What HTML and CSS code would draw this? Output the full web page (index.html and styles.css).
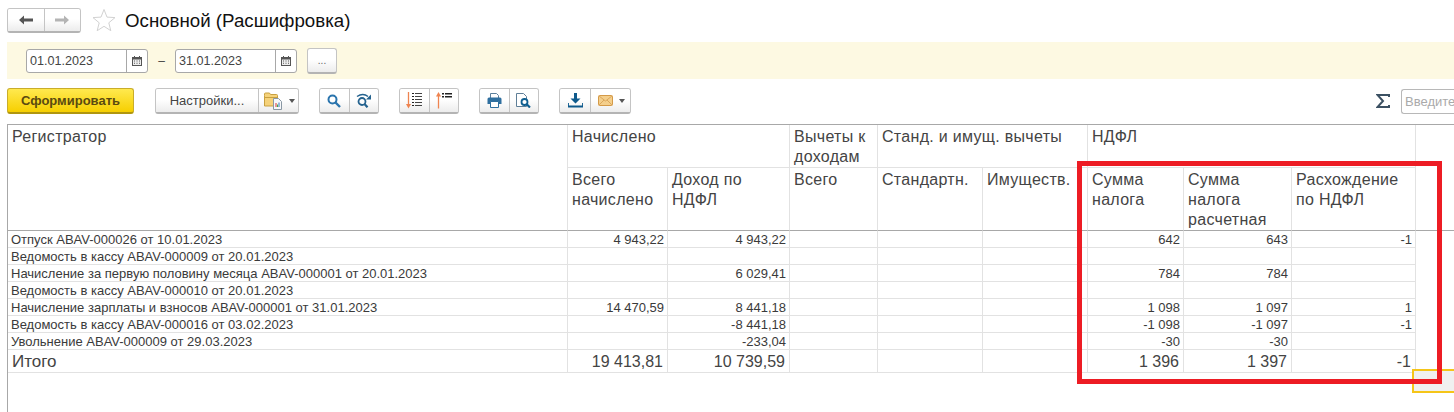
FILE: index.html
```html
<!DOCTYPE html>
<html lang="ru">
<head>
<meta charset="utf-8">
<title>Основной (Расшифровка)</title>
<link rel="stylesheet" href="styles.css">
</head>
<body>
<div class="page">
  <header class="titlebar">
    <div class="btn-group nav">
      <span class="btn seg-nav"><svg width="16" height="12" viewBox="0 0 16 12"><path d="M1 6l5-4.500V4.500h9v3H6v3z" fill="#555"/></svg></span>
      <span class="btn seg-nav"><svg width="16" height="12" viewBox="0 0 16 12"><path d="M15 6l-5-4.500V4.500H1v3h9v3z" fill="#b4b4b4"/></svg></span>
    </div>
    <svg class="star" width="24" height="24" viewBox="0 0 24 24"><path d="M12 1.500l3 7.600 8 .5-6.200 5.200 2 7.900L12 18.300l-6.800 4.400 2-7.900L1 9.600l8-.5z" fill="#fff" stroke="#d2d2d2" stroke-width="1"/></svg>
    <h1 class="title">Основной (Расшифровка)</h1>
  </header>

  <section class="filter">
    <div class="date"><span class="date-val">01.01.2023</span><span class="date-btn"><svg width="10" height="10" viewBox="0 0 10 10"><path d="M0 1h10v9H0zM2 0h1v2H2zM7 0h1v2H7z" fill="#555"/><path d="M1 3.500h8V9H1z" fill="#eee"/><path d="M2 4.500h1v1H2zM4.500 4.500h1v1h-1zM7 4.500h1v1H7zM2 6.800h1v1H2zM4.500 6.800h1v1h-1zM7 6.800h1v1H7z" fill="#555"/></svg></span></div>
    <span class="dash">–</span>
    <div class="date"><span class="date-val">31.01.2023</span><span class="date-btn"><svg width="10" height="10" viewBox="0 0 10 10"><path d="M0 1h10v9H0zM2 0h1v2H2zM7 0h1v2H7z" fill="#555"/><path d="M1 3.500h8V9H1z" fill="#eee"/><path d="M2 4.500h1v1H2zM4.500 4.500h1v1h-1zM7 4.500h1v1H7zM2 6.800h1v1H2zM4.500 6.800h1v1h-1zM7 6.800h1v1H7z" fill="#555"/></svg></span></div>
    <span class="btn more">...</span>
  </section>

  <section class="toolbar">
    <span class="btn primary">Сформировать</span>
    <div class="btn-group g-settings">
      <span class="btn seg-text">Настройки...</span>
      <span class="btn seg-wide">
        <svg width="20" height="18" viewBox="0 0 20 18"><path d="M.5 3.500V2q0-1 1-1h4l1 1.500h6q1 0 1 1V14H.5z" fill="#f5d27a" stroke="#c8a040"/><path d="M.5 5.500h13.500" stroke="#c8a040"/><path d="M9.500 6.500h5l3 3v8h-8z" fill="#f6f8fa" stroke="#8a98a4"/><path d="M11.500 11h1v4h-1z" fill="#d33"/><path d="M13 12.500h1V15h-1z" fill="#4a4"/><path d="M14.500 10.500h1V15h-1z" fill="#37b"/></svg>
        <i class="caret"></i>
      </span>
    </div>
    <div class="btn-group g-icons">
      <span class="btn seg"><svg width="14" height="14" viewBox="0 0 14 14"><circle cx="5.500" cy="5.500" r="4" fill="none" stroke="#2a74ad" stroke-width="2"/><path d="M8.500 8.500l4.500 4.500" stroke="#2a74ad" stroke-width="2.400"/></svg></span>
      <span class="btn seg"><svg width="16" height="15" viewBox="0 0 16 15"><circle cx="6" cy="8.500" r="3.500" fill="none" stroke="#25638f" stroke-width="1.800"/><path d="M8.500 11l3 3.300" stroke="#25638f" stroke-width="2.200"/><path d="M1 3.500Q7-.5 12 3.500" fill="none" stroke="#25638f" stroke-width="1.500"/><path d="M15 1.500v5h-5z" fill="#25638f"/></svg></span>
    </div>
    <div class="btn-group g-icons">
      <span class="btn seg"><svg width="16" height="17" viewBox="0 0 16 17"><path d="M2.500 0v13" stroke="#ef8450" stroke-width="1.300"/><path d="M0 12h5l-2.500 4.500z" fill="#ef8450"/><path d="M6 1h2v1H6zM6 4h2v1H6zM6 7h2v1H6zM6 10h2v1H6zM6 13h2v1H6z" fill="#222"/><path d="M9 1h7v1H9zM9 4h7v1H9zM9 7h7v1H9zM9 10h7v1H9zM9 13h7v1H9z" fill="#444"/></svg></span>
      <span class="btn seg"><svg width="16" height="17" viewBox="0 0 16 17"><path d="M2.500 3v13.500" stroke="#ef8450" stroke-width="1.300"/><path d="M0 4.500h5L2.500 0z" fill="#ef8450"/><path d="M6 1h2v1.500H6zM6 4h2v1.500H6z" fill="#222"/><path d="M9 1h7v1.500H9zM9 4h7v1.500H9z" fill="#222"/></svg></span>
    </div>
    <div class="btn-group g-icons">
      <span class="btn seg"><svg width="15" height="15" viewBox="0 0 15 15"><path d="M3.500 5V.5h6l2 2V5" fill="#fff" stroke="#5c7f9c"/><path d="M2 4.500h11q1.500 0 1.500 1.500v5h-14V6q0-1.500 1.500-1.500z" fill="#2f6f9f"/><path d="M3.500 8.500h8v6h-8z" fill="#fff" stroke="#2f6f9f"/></svg></span>
      <span class="btn seg"><svg width="15" height="15" viewBox="0 0 15 15"><path d="M.5.500h7l3 3v10h-10z" fill="#fff" stroke="#5f7f98"/><circle cx="8.500" cy="9" r="3" fill="#fff" stroke="#0f5f90" stroke-width="1.800"/><path d="M10.500 11l3.500 3.500" stroke="#0f5f90" stroke-width="2.200"/></svg></span>
    </div>
    <div class="btn-group g-send">
      <span class="btn seg"><svg width="15" height="15" viewBox="0 0 15 15"><path d="M6 0h3v5.500h3.500L7.500 10.500 2.500 5.500H6z" fill="#0e5a8c"/><path d="M0 10v3.500h15V10" fill="none" stroke="#0e5a8c" stroke-width="1.800"/></svg></span>
      <span class="btn seg-mail">
        <svg width="15" height="11" viewBox="0 0 15 11"><rect x=".5" y=".5" width="14" height="10" rx="1" fill="#f4cf8c" stroke="#d49a48"/><path d="M1 1l6.500 5L14 1M1 10l5-5M14 10L9 5" fill="none" stroke="#dba75c"/></svg>
        <i class="caret"></i>
      </span>
    </div>
    <span class="spacer"></span>
    <svg class="sigma" width="14" height="14" viewBox="0 0 14 14"><path d="M13 3V1H1.500l5.500 6-5.500 6H13v-2" fill="none" stroke="#3c5163" stroke-width="2"/></svg>
    <div class="search">Введите</div>
  </section>

  <div class="report">
    <table class="grid">
      <colgroup>
        <col class="c-reg"><col class="c-a"><col class="c-b"><col class="c-c"><col class="c-d"><col class="c-d"><col class="c-e"><col class="c-f"><col class="c-g"><col class="c-end">
      </colgroup>
      <thead>
        <tr class="h1">
          <th rowspan="2" class="h-last">Регистратор</th>
          <th colspan="2">Начислено</th>
          <th>Вычеты к доходам</th>
          <th colspan="2">Станд. и имущ. вычеты</th>
          <th colspan="3">НДФЛ</th>
          <th rowspan="2" class="h-last filler"></th>
        </tr>
        <tr class="h2">
          <th class="h-last">Всего начислено</th>
          <th class="h-last">Доход по НДФЛ</th>
          <th class="h-last">Всего</th>
          <th class="h-last">Стандартн.</th>
          <th class="h-last">Имуществ.</th>
          <th class="h-last">Сумма налога</th>
          <th class="h-last">Сумма налога расчетная</th>
          <th class="h-last">Расхождение по НДФЛ</th>
        </tr>
      </thead>
      <tbody>
        <tr><td>Отпуск ABAV-000026 от 10.01.2023</td><td class="n">4 943,22</td><td class="n">4 943,22</td><td></td><td></td><td></td><td class="n">642</td><td class="n">643</td><td class="n">-1</td><td class="filler"></td></tr>
        <tr><td>Ведомость в кассу ABAV-000009 от 20.01.2023</td><td></td><td></td><td></td><td></td><td></td><td></td><td></td><td></td><td class="filler"></td></tr>
        <tr><td>Начисление за первую половину месяца ABAV-000001 от 20.01.2023</td><td></td><td class="n">6 029,41</td><td></td><td></td><td></td><td class="n">784</td><td class="n">784</td><td></td><td class="filler"></td></tr>
        <tr><td>Ведомость в кассу ABAV-000010 от 20.01.2023</td><td></td><td></td><td></td><td></td><td></td><td></td><td></td><td></td><td class="filler"></td></tr>
        <tr><td>Начисление зарплаты и взносов ABAV-000001 от 31.01.2023</td><td class="n">14 470,59</td><td class="n">8 441,18</td><td></td><td></td><td></td><td class="n">1 098</td><td class="n">1 097</td><td class="n">1</td><td class="filler"></td></tr>
        <tr><td>Ведомость в кассу ABAV-000016 от 03.02.2023</td><td></td><td class="n">-8 441,18</td><td></td><td></td><td></td><td class="n">-1 098</td><td class="n">-1 097</td><td class="n">-1</td><td class="filler"></td></tr>
        <tr><td>Увольнение ABAV-000009 от 29.03.2023</td><td></td><td class="n">-233,04</td><td></td><td></td><td></td><td class="n">-30</td><td class="n">-30</td><td></td><td class="filler"></td></tr>
      </tbody>
      <tfoot>
        <tr><td class="total-label">Итого</td><td class="n">19 413,81</td><td class="n">10 739,59</td><td></td><td></td><td></td><td class="n">1 396</td><td class="n">1 397</td><td class="n">-1</td><td class="filler"></td></tr>
      </tfoot>
    </table>
  </div>

  <div class="cursor-cell"></div>
  <div class="highlight"></div>
</div>
</body>
</html>
```

FILE: styles.css
```css
* { box-sizing: border-box; }
html, body { margin: 0; padding: 0; }
body { background: #fff; font-family: "Liberation Sans", Arial, sans-serif; color: #333; }
.page { position: relative; width: 1454px; height: 412px; overflow: hidden; }

/* buttons */
.btn {
  display: flex; align-items: center; justify-content: center;
  background: linear-gradient(#ffffff, #ffffff 45%, #ececec);
  height: 100%;
}
.btn-group {
  display: flex; height: 26px;
  border: 1px solid #c4c4c4; border-bottom: 2px solid #b4b4b4; border-radius: 3px;
  overflow: hidden;
}
.btn-group .btn + .btn { border-left: 1px solid #c4c4c4; }

/* title */
.titlebar { display: flex; align-items: center; height: 42px; padding: 8px 0 10px 7px; }
.nav { width: 74px; height: 25px; }
.seg-nav { flex: 1; }
.star { margin-left: 11px; flex: none; }
.title { margin: 1px 0 0 9px; font-size: 18.700px; font-weight: 400; color: #111; white-space: nowrap; }

/* filter */
.filter {
  display: flex; align-items: center; height: 37px; margin-left: 7px;
  padding-left: 19px; background: #fdf9e2;
}
.date {
  display: flex; width: 122px; height: 24px; background: #fff;
  border: 1px solid #a8a8a8; border-radius: 3px; font-size: 12.600px; color: #444;
}
.date-val { flex: 1; padding-left: 3px; line-height: 22px; }
.date-btn { width: 21px; border-left: 1px solid #a8a8a8; display: flex; align-items: center; justify-content: center; }
.dash { width: 27px; text-align: center; font-size: 12px; color: #444; }
.more {
  width: 30px; height: 26px; margin-left: 10px; font-size: 10px; color: #666;
  border: 1px solid #c4c4c4; border-bottom: 2px solid #b4b4b4; border-radius: 3px;
}

/* toolbar */
.toolbar { display: flex; align-items: center; height: 45px; padding: 9px 0 10px 7px; }
.primary {
  width: 127px; height: 26px; font-size: 13px; font-weight: 700; color: #5a4a10;
  background: linear-gradient(#ffe94f, #f6cf00);
  border: 1px solid #c9ad2a; border-bottom: 2px solid #b0960f; border-radius: 3px;
}
.g-settings { margin-left: 21px; width: 144px; }
.seg-text { width: 102px; font-size: 13px; color: #444; flex: none; }
.seg-wide { flex: 1; gap: 5px; padding-left: 1px; }
.g-icons { margin-left: 20px; width: 60px; }
.seg { flex: 1; }
.g-send { margin-left: 20px; width: 72px; }
.g-send .seg { flex: none; width: 30px; }
.seg-mail { flex: 1; gap: 6px; padding-left: 1px; }
.caret { width: 0; height: 0; border: 3px solid transparent; border-top: 4px solid #555; border-bottom: 0; }
.spacer { flex: 1; }
.sigma { flex: none; margin-right: 11px; }
.search {
  width: 53px; height: 25px; flex: none; white-space: nowrap;
  border: 1px solid #b8b8b8; border-right: 0; border-radius: 3px 0 0 3px;
  font-size: 13px; line-height: 23px; padding-left: 3px; color: #aaa;
}

/* report */
.report { margin-left: 7px; height: 288px; border-left: 1px solid #a8a8a8; border-top: 1px solid #a8a8a8; }
.grid { table-layout: fixed; width: 1446px; border-collapse: separate; border-spacing: 0; }
.c-reg { width: 560px; } .c-a { width: 100px; } .c-b { width: 122px; } .c-c { width: 88px; }
.c-d { width: 105px; } .c-e { width: 96px; } .c-f { width: 108px; } .c-g { width: 124px; } .c-end { width: 38px; }
.grid th, .grid td { border-right: 1px solid #e2e2e2; border-bottom: 1px solid #e2e2e2; padding: 0; }
.grid th {
  font-weight: 400; font-size: 16px; letter-spacing: .3px; line-height: 20px; text-align: left; vertical-align: top;
  padding: 2px 4px 0 4px; color: #444;
}
.h1 { height: 43px; }
.h2 { height: 63px; }
.grid th.h-last { border-bottom-color: #a8a8a8; }
.grid th.filler { border-right: 0; }
.grid td.filler { border: 0; }
.grid tbody tr { height: 17px; }
.grid td { font-size: 13px; line-height: 15px; padding: 1px 3px 0; white-space: nowrap; color: #3a3a3a; }
.grid td.n { text-align: right; }
.grid tfoot tr { height: 23px; }
.grid tfoot td { font-size: 16px; line-height: 21px; padding: 1px 4px 0; color: #444; }
.grid tfoot td.total-label { font-size: 17px; }

/* overlays */
.cursor-cell {
  position: absolute; left: 1412px; top: 369px; width: 60px; height: 24px;
  background: #f0f0f0; border: 2px solid #f5c518;
}
.highlight {
  position: absolute; left: 1077px; top: 161px; width: 365px; height: 223px;
  border: 5px solid #ed1c24;
}
```
